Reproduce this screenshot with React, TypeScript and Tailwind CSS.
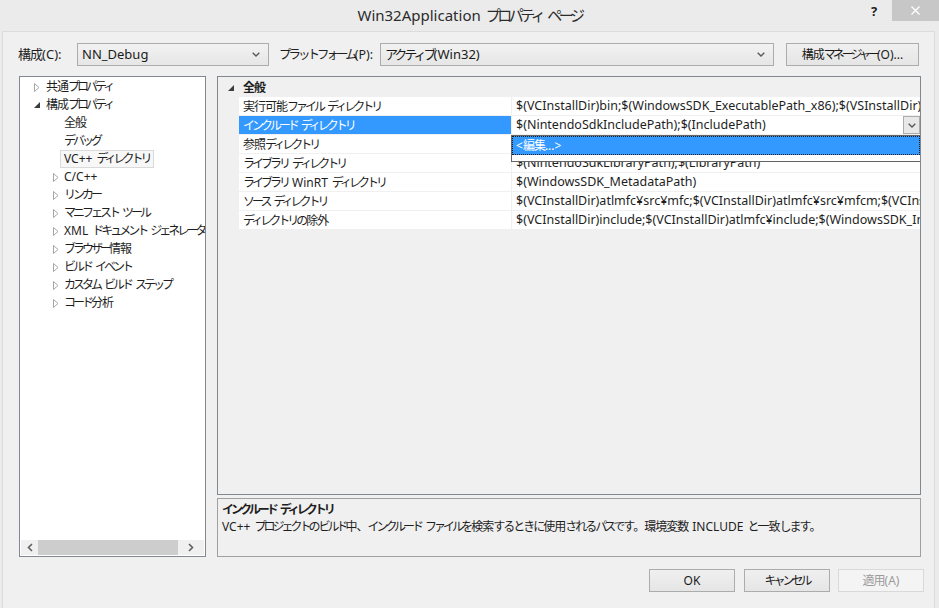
import React from "react";

type RunType = 0 | 1 | 2 | 3 | 4;

function J({ t, size = "sm" }: { t: string; size?: "sm" | "lg" }) {
  const runs: { s: string; k: RunType }[] = [];
  for (const ch of t) {
    const k: RunType =
      ch === " "
        ? 4
        : /[\u30a0-\u30ff]/.test(ch)
        ? 1
        : /[\u3040-\u309f]/.test(ch)
        ? 3
        : /[\u3000-\u303f\u4e00-\u9fff\uff00-\uffef]/.test(ch)
        ? 2
        : 0;
    const last = runs[runs.length - 1];
    if (last && last.k === k) last.s += ch;
    else runs.push({ s: ch, k });
  }
  const lg = size === "lg";
  return (
    <>
      {runs.map((r, i) => {
        if (r.k === 0) return <React.Fragment key={i}>{r.s}</React.Fragment>;
        if (r.k === 4)
          return (
            <span key={i} className={lg ? "inline-block w-[5px]" : "inline-block w-[4px]"}>
              {" "}
            </span>
          );
        const cls =
          r.k === 1
            ? lg
              ? "tracking-[-3.5px]"
              : "tracking-[-3px]"
            : r.k === 3
            ? lg
              ? "tracking-[-2.5px]"
              : "tracking-[-2px]"
            : lg
            ? "tracking-[-1.5px]"
            : "tracking-[-1px]";
        return (
          <span key={i} className={cls}>
            {r.s}
          </span>
        );
      })}
    </>
  );
}

function Chevron() {
  return (
    <svg width="8" height="5" viewBox="0 0 8 5">
      <path d="M0.7 0.7 L4 4 L7.3 0.7" fill="none" stroke="#5a5a5a" strokeWidth="1.4" />
    </svg>
  );
}

function TriC() {
  return (
    <svg width="6" height="9" viewBox="0 0 6 9">
      <path d="M0.5 0.5 L5 4.5 L0.5 8.5 Z" fill="#ffffff" stroke="#a6a6a6" />
    </svg>
  );
}

function TriE() {
  return (
    <svg width="6" height="6" viewBox="0 0 6 6">
      <path d="M6 0 L6 6 L0 6 Z" fill="#3c3c3c" />
    </svg>
  );
}

type TreeItem = { t: string; lvl: 0 | 1; tri?: "c" | "e"; sel?: boolean };

const tree: TreeItem[] = [
  { t: "共通プロパティ", lvl: 0, tri: "c" },
  { t: "構成プロパティ", lvl: 0, tri: "e" },
  { t: "全般", lvl: 1 },
  { t: "デバッグ", lvl: 1 },
  { t: "VC++ ディレクトリ", lvl: 1, sel: true },
  { t: "C/C++", lvl: 1, tri: "c" },
  { t: "リンカー", lvl: 1, tri: "c" },
  { t: "マニフェスト ツール", lvl: 1, tri: "c" },
  { t: "XML ドキュメント ジェネレータ", lvl: 1, tri: "c" },
  { t: "ブラウザー情報", lvl: 1, tri: "c" },
  { t: "ビルド イベント", lvl: 1, tri: "c" },
  { t: "カスタム ビルド ステップ", lvl: 1, tri: "c" },
  { t: "コード分析", lvl: 1, tri: "c" },
];

const props: { n: string; v: string; sel?: boolean }[] = [
  {
    n: "実行可能ファイル ディレクトリ",
    v: "$(VCInstallDir)bin;$(WindowsSDK_ExecutablePath_x86);$(VSInstallDir)Common7¥Tools¥bin;$(VSInstallDir)Common7¥tools;$(VSInstallDir)Common7¥ide;",
  },
  { n: "インクルード ディレクトリ", v: "$(NintendoSdkIncludePath);$(IncludePath)", sel: true },
  { n: "参照ディレクトリ", v: "" },
  { n: "ライブラリ ディレクトリ", v: "$(NintendoSdkLibraryPath);$(LibraryPath)" },
  { n: "ライブラリ WinRT ディレクトリ", v: "$(WindowsSDK_MetadataPath)" },
  {
    n: "ソース ディレクトリ",
    v: "$(VCInstallDir)atlmfc¥src¥mfc;$(VCInstallDir)atlmfc¥src¥mfcm;$(VCInstallDir)atlmfc¥src¥atl;$(VCInstallDir)crt¥src;",
  },
  {
    n: "ディレクトリの除外",
    v: "$(VCInstallDir)include;$(VCInstallDir)atlmfc¥include;$(WindowsSDK_IncludePath);$(MSBuild_ExecutablePath);$(VC_LibraryPath_x86);",
  },
];

function Combo({ w, text }: { w: string; text: string }) {
  return (
    <div
      className={`${w} h-[23px] border border-[#acacac] bg-gradient-to-b from-[#f2f2f2] to-[#e6e6e6] flex items-center pl-[4px] pr-[8px]`}
    >
      <span className="flex-1 whitespace-nowrap overflow-hidden text-[#1a1a1a] text-[13px] pt-[1px]">
        <J t={text} />
      </span>
      <Chevron />
    </div>
  );
}

function Btn({ text, disabled, w }: { text: string; disabled?: boolean; w: string }) {
  return (
    <div
      className={`${w} h-[23px] flex items-center justify-center border text-[12px] pt-[1px] ${
        disabled
          ? "border-[#d9d9d9] bg-[#f4f4f4] text-[#9c9c9c]"
          : "border-[#acacac] bg-gradient-to-b from-[#f0f0f0] to-[#e5e5e5] text-[#1a1a1a]"
      }`}
    >
      <span className="whitespace-nowrap">
        <J t={text} />
      </span>
    </div>
  );
}

export default function App() {
  return (
    <div className="w-[939px] h-[608px] bg-[#ebebeb] flex flex-col overflow-hidden font-['Noto_Sans','Noto_Sans_CJK_JP',sans-serif] text-[12px] text-[#1e1e1e]">
      {/* Title bar */}
      <div className="h-[31px] shrink-0 relative flex items-center justify-center">
        <span className="text-[15px] text-[#2b2b2b] whitespace-nowrap pb-[1px]">
          <J t="Win32Application プロパティ ページ" size="lg" />
        </span>
        <span className="absolute left-[871px] top-[2px] text-[13px] font-bold text-[#222]">?</span>
        <div className="absolute right-0 top-0 w-[47px] h-[21px] bg-[#c7c7c7] flex items-center justify-center">
          <svg width="9" height="9" viewBox="0 0 9 9">
            <path d="M0.5 0.5 L8.5 8.5 M8.5 0.5 L0.5 8.5" stroke="#ffffff" strokeWidth="1.3" />
          </svg>
        </div>
      </div>

      {/* Body */}
      <div className="flex-1 ml-[2px] w-[933px] bg-[#f0f0f0] border-l border-r border-t border-[#dcdcdc] flex flex-col">
        {/* toolbar row */}
        <div className="mt-[11px] h-[23px] flex items-center pl-[15px]">
          <div className="w-[59px] text-[13px] whitespace-nowrap pt-[1px]">
            <J t="構成(C):" />
          </div>
          <Combo w="w-[192px]" text="NN_Debug" />
          <div className="ml-[10px] w-[101px] text-[12.5px] whitespace-nowrap pt-[1px]">
            <J t="プラットフォーム(P):" />
          </div>
          <Combo w="w-[394px]" text="アクティブ(Win32)" />
          <div className="ml-[12px]">
            <Btn w="w-[133px]" text="構成マネージャー(O)..." />
          </div>
        </div>

        {/* main area */}
        <div className="mt-[10px] h-[481px] flex pl-[16px]">
          {/* tree */}
          <div className="w-[187px] h-full border border-[#828790] bg-white flex flex-col overflow-hidden">
            <div className="flex-1 pt-[1px]">
              {tree.map((it, i) => (
                <div key={i} className="h-[18px] flex items-center whitespace-nowrap">
                  {it.lvl === 0 ? (
                    <>
                      <div className="w-[14px] shrink-0" />
                      <div className="w-[12px] shrink-0 flex items-center">{it.tri === "e" ? <TriE /> : <TriC />}</div>
                      <span>
                        <J t={it.t} />
                      </span>
                    </>
                  ) : (
                    <>
                      <div className="w-[33px] shrink-0" />
                      <div className="w-[7px] shrink-0 flex items-center">{it.tri ? <TriC /> : null}</div>
                      {it.sel ? (
                        <span className="h-[18px] flex items-center border border-[#dadada] bg-[#f7f7f7] px-[3px]">
                          <J t={it.t} />
                        </span>
                      ) : (
                        <span className="pl-[4px]">
                          <J t={it.t} />
                        </span>
                      )}
                    </>
                  )}
                </div>
              ))}
            </div>
            <div className="h-[15px] mx-[1px] mb-[1px] bg-[#f0f0f0] flex items-center">
              <div className="w-[17px] flex justify-center">
                <svg width="6" height="9" viewBox="0 0 6 9">
                  <path d="M5 1 L1.5 4.5 L5 8" fill="none" stroke="#606060" strokeWidth="1.6" />
                </svg>
              </div>
              <div className="w-[140px] h-[15px] bg-[#cdcdcd]" />
              <div className="flex-1 flex justify-center">
                <svg width="6" height="9" viewBox="0 0 6 9">
                  <path d="M1 1 L4.5 4.5 L1 8" fill="none" stroke="#606060" strokeWidth="1.6" />
                </svg>
              </div>
            </div>
          </div>

          {/* right column */}
          <div className="ml-[11px] w-[704px] h-full flex flex-col">
            <div className="h-[419px] border border-[#828790] bg-[#f0f0f0] relative overflow-hidden">
              <div className="h-[20px] flex items-center pt-[1px]">
                <div className="w-[10px]" />
                <div className="w-[15px] flex items-center">
                  <TriE />
                </div>
                <span className="font-bold">
                  <J t="全般" />
                </span>
              </div>
              {props.map((p, i) => (
                <div key={i} className="h-[18px] mb-[1px] flex pl-[21px]">
                  <div
                    className={`w-[272px] h-full flex items-center pl-[4px] pt-[1px] whitespace-nowrap overflow-hidden ${
                      p.sel ? "bg-[#3399ff] text-white" : "bg-white"
                    }`}
                  >
                    <J t={p.n} />
                  </div>
                  <div className="ml-[1px] flex-1 h-full bg-white flex items-center pl-[4px] pt-[1px] whitespace-nowrap overflow-hidden relative text-[12.5px]">
                    <span>{p.v}</span>
                    {p.sel ? (
                      <div className="absolute right-0 top-0 w-[17px] h-[18px] border border-[#acacac] bg-[#e8e8e8] flex items-center justify-center">
                        <Chevron />
                      </div>
                    ) : null}
                  </div>
                </div>
              ))}

              {/* dropdown popup */}
              <div className="absolute left-[293px] top-[58px] w-[410px] h-[27px] border border-[#646464] bg-white">
                <div className="h-[19px] bg-[#3399ff] border border-dotted border-[#1a1a1a] text-white flex items-center pl-[3px] pt-[1px] whitespace-nowrap">
                  <J t="<編集...>" />
                </div>
              </div>
            </div>

            <div className="mt-[3px] h-[59px] border border-[#a0a0a0] bg-[#f0f0f0] pl-[4px] pt-[2px] leading-[17px]">
              <div className="font-bold whitespace-nowrap">
                <J t="インクルード ディレクトリ" />
              </div>
              <div className="whitespace-nowrap">
                <J t="VC++ プロジェクトのビルド中、インクルード ファイルを検索するときに使用されるパスです。環境変数 INCLUDE と一致します。" />
              </div>
            </div>
          </div>
        </div>

        {/* buttons */}
        <div className="mt-[12px] h-[23px] flex justify-end pr-[10px]">
          <Btn w="w-[86px]" text="OK" />
          <div className="w-[9px]" />
          <Btn w="w-[86px]" text="キャンセル" />
          <div className="w-[8px]" />
          <Btn w="w-[86px]" text="適用(A)" disabled />
        </div>
      </div>
    </div>
  );
}
